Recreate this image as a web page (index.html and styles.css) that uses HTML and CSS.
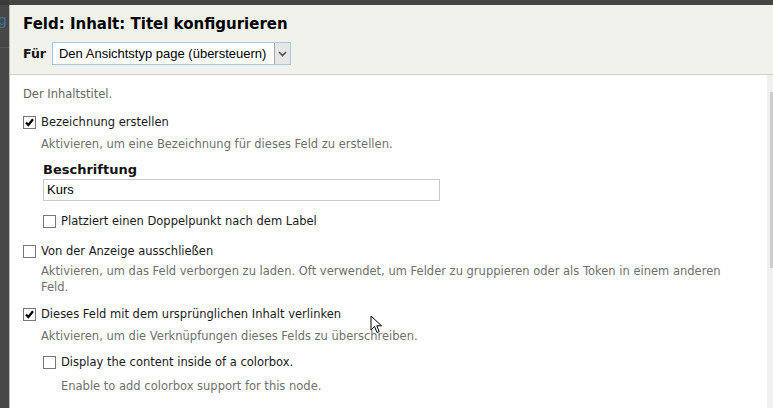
FILE: index.html
```html
<!DOCTYPE html>
<html lang="de">
<head>
<meta charset="utf-8">
<title>Feld: Inhalt: Titel konfigurieren</title>
<link rel="stylesheet" href="styles.css">
</head>
<body>
<div class="page">
  <div class="backdrop">
    <div class="backdrop-top"></div>
    <div class="backdrop-link">g</div>
    <div class="backdrop-line"></div>
  </div>
  <div class="dialog">
    <div class="dialog-header">
      <h1 class="title">Feld: Inhalt: Titel konfigurieren</h1>
      <div class="for-row">
        <span class="for-label">Für</span>
        <div class="select">
          <span class="select-text">Den Ansichtstyp page (übersteuern)</span>
          <span class="select-btn">
            <svg width="9" height="6" viewBox="0 0 9 6"><path d="M1 1 L4.5 4.5 L8 1" fill="none" stroke="#555" stroke-width="1.6"/></svg>
          </span>
        </div>
      </div>
    </div>
    <div class="dialog-body">
      <div class="content">
        <div class="intro">Der Inhaltstitel.</div>

        <div class="item item-1">
          <div class="check-row">
            <span class="checkbox checked"><svg width="11" height="11" viewBox="0 0 11 11"><path d="M2 5.5 L4.3 8 L9 2.2" fill="none" stroke="#000" stroke-width="2.2"/></svg></span>
            <span class="label">Bezeichnung erstellen</span>
          </div>
          <div class="desc">Aktivieren, um eine Bezeichnung für dieses Feld zu erstellen.</div>
          <div class="sub">
            <div class="field-label">Beschriftung</div>
            <div class="text-input">Kurs</div>
            <div class="check-row sub-check">
              <span class="checkbox"></span>
              <span class="label">Platziert einen Doppelpunkt nach dem Label</span>
            </div>
          </div>
        </div>

        <div class="item item-2">
          <div class="check-row">
            <span class="checkbox"></span>
            <span class="label">Von der Anzeige ausschließen</span>
          </div>
          <div class="desc desc-2">Aktivieren, um das Feld verborgen zu laden. Oft verwendet, um Felder zu gruppieren oder als Token in einem anderen Feld.</div>
        </div>

        <div class="item item-3">
          <div class="check-row">
            <span class="checkbox checked"><svg width="11" height="11" viewBox="0 0 11 11"><path d="M2 5.5 L4.3 8 L9 2.2" fill="none" stroke="#000" stroke-width="2.2"/></svg></span>
            <span class="label">Dieses Feld mit dem ursprünglichen Inhalt verlinken</span>
          </div>
          <div class="desc">Aktivieren, um die Verknüpfungen dieses Felds zu überschreiben.</div>
          <div class="sub">
            <div class="check-row sub-check-2">
              <span class="checkbox"></span>
              <span class="label">Display the content inside of a colorbox.</span>
            </div>
            <div class="desc desc-sub">Enable to add colorbox support for this node.</div>
          </div>
        </div>
      </div>
      <div class="scrollbar"><div class="thumb"></div></div>
    </div>
  </div>
  <svg class="cursor" width="14" height="20" viewBox="0 0 14 20"><path d="M1 1 L1 15 L4.5 11.5 L7 17.5 L9.2 16.6 L6.8 10.8 L11.5 10.8 Z" fill="#fff" stroke="#000" stroke-width="1"/></svg>
</div>
</body>
</html>
```

FILE: styles.css
```css
html, body {
  margin: 0;
  padding: 0;
}
body {
  background: #454545;
  font-family: "DejaVu Sans", Verdana, sans-serif;
  width: 773px;
  height: 408px;
  overflow: hidden;
}
.page {
  position: relative;
  display: flex;
  height: 408px;
}
.backdrop {
  width: 9px;
  flex: none;
  background: #474747;
  overflow: hidden;
}
.backdrop-top {
  height: 5px;
  background: #3a3a3a;
}
.backdrop-link {
  margin-left: -2px;
  margin-top: 6px;
  font-family: "DejaVu Sans", sans-serif;
  font-size: 14px;
  line-height: 18px;
  color: #3d6f98;
}
.backdrop-line {
  margin-top: 18px;
  height: 1px;
  background: #555;
}
.dialog {
  flex: 1;
  display: flex;
  flex-direction: column;
  margin-top: 5px;
  border-left: 1px solid #b9b9b9;
  background: #fff;
  min-width: 0;
}
.dialog-header {
  background: #f2f2ed;
  border-bottom: 1px solid #cfcfcf;
  padding: 9px 13px 9px 13px;
  height: 51px;
}
.title {
  margin: 0;
  font-size: 15px;
  line-height: 20px;
  font-weight: bold;
  color: #000;
}
.for-row {
  display: flex;
  align-items: center;
  gap: 6px;
  margin-top: 8px;
}
.for-label {
  font-size: 12.5px;
  font-weight: bold;
  color: #111;
}
.select {
  display: flex;
  align-items: stretch;
  width: 237px;
  height: 21px;
  border: 1px solid #a9c6e4;
  background: #fff;
}
.select-text {
  flex: 1;
  font-family: "Liberation Sans", Arial, sans-serif;
  font-size: 13px;
  line-height: 21px;
  padding-left: 6px;
  color: #000;
  white-space: nowrap;
}
.select-btn {
  width: 15px;
  background: #e6e6e6;
  border-left: 1px solid #a9a9a9;
  display: flex;
  align-items: center;
  justify-content: center;
}
.dialog-body {
  flex: 1;
  display: flex;
  min-height: 0;
}
.content {
  flex: 1;
  padding: 11px 0 0 13px;
  font-size: 11.5px;
  line-height: 16px;
  color: #222;
}
.intro {
  color: #666;
}
.check-row {
  display: flex;
  align-items: center;
  gap: 5px;
}
.checkbox {
  width: 11px;
  height: 11px;
  border: 1px solid #777;
  background: #fff;
  display: flex;
  align-items: center;
  justify-content: center;
  flex: none;
}
.label {
  color: #1a1a1a;
}
.desc {
  color: #6f6f6f;
  margin-left: 18px;
  margin-top: 6px;
  padding-right: 32px;
}
.item-1 {
  margin-top: 12px;
}
.sub {
  margin-left: 20px;
}
.field-label {
  margin-top: 10px;
  font-size: 13px;
  font-weight: bold;
  color: #111;
}
.text-input {
  margin-top: 1px;
  width: 392px;
  height: 20px;
  border: 1px solid #c8c8c8;
  padding-left: 3px;
  font-family: "Liberation Sans", Arial, sans-serif;
  font-size: 13px;
  line-height: 20px;
  color: #000;
}
.sub-check {
  margin-top: 12px;
}
.item-2 {
  margin-top: 14px;
}
.desc-2 {
  margin-top: 4px;
}
.item-3 {
  margin-top: 11px;
}
.sub-check-2 {
  margin-top: 10px;
}
.desc-sub {
  margin-top: 8px;
}
.scrollbar {
  width: 6px;
  flex: none;
  background: #f0f0f0;
  position: relative;
}
.thumb {
  margin-top: 17px;
  margin-left: 3px;
  width: 3px;
  height: 176px;
  background: #cdcdcd;
}
.cursor {
  position: absolute;
  left: 370px;
  top: 315px;
}
```
